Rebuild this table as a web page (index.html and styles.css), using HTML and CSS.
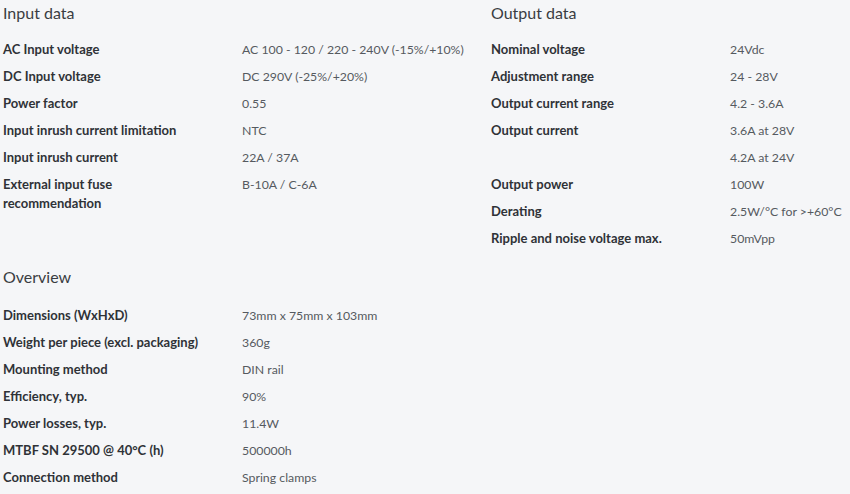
FILE: index.html
```html
<!DOCTYPE html>
<html>
<head>
<meta charset="utf-8">
<link rel="stylesheet" href="styles.css">
</head>
<body>
<div class="page">
  <div class="cols">
    <section class="block">
      <h3 class="title">Input data</h3>
      <div class="row"><div class="label">AC Input voltage</div><div class="value">AC 100 - 120 / 220 - 240V (-15%/+10%)</div></div>
      <div class="row"><div class="label">DC Input voltage</div><div class="value">DC 290V (-25%/+20%)</div></div>
      <div class="row"><div class="label">Power factor</div><div class="value">0.55</div></div>
      <div class="row"><div class="label">Input inrush current limitation</div><div class="value">NTC</div></div>
      <div class="row"><div class="label">Input inrush current</div><div class="value">22A / 37A</div></div>
      <div class="row"><div class="label">External input fuse<br>recommendation</div><div class="value">B-10A / C-6A</div></div>
    </section>
    <section class="block">
      <h3 class="title">Output data</h3>
      <div class="row"><div class="label">Nominal voltage</div><div class="value">24Vdc</div></div>
      <div class="row"><div class="label">Adjustment range</div><div class="value">24 - 28V</div></div>
      <div class="row"><div class="label">Output current range</div><div class="value">4.2 - 3.6A</div></div>
      <div class="row"><div class="label">Output current</div><div class="value">3.6A at 28V</div></div>
      <div class="row"><div class="label"></div><div class="value">4.2A at 24V</div></div>
      <div class="row"><div class="label">Output power</div><div class="value">100W</div></div>
      <div class="row"><div class="label">Derating</div><div class="value">2.5W/°C for &gt;+60°C</div></div>
      <div class="row"><div class="label">Ripple and noise voltage max.</div><div class="value">50mVpp</div></div>
    </section>
  </div>
  <section class="block overview">
    <h3 class="title">Overview</h3>
    <div class="row"><div class="label">Dimensions (WxHxD)</div><div class="value">73mm x 75mm x 103mm</div></div>
    <div class="row"><div class="label">Weight per piece (excl. packaging)</div><div class="value">360g</div></div>
    <div class="row"><div class="label">Mounting method</div><div class="value">DIN rail</div></div>
    <div class="row"><div class="label">Efficiency, typ.</div><div class="value">90%</div></div>
    <div class="row"><div class="label">Power losses, typ.</div><div class="value">11.4W</div></div>
    <div class="row"><div class="label">MTBF SN 29500 @ 40°C (h)</div><div class="value">500000h</div></div>
    <div class="row"><div class="label">Connection method</div><div class="value">Spring clamps</div></div>
  </section>
</div>
</body>
</html>
```
FILE: styles.css
```css
html, body {
  margin: 0;
  padding: 0;
  background: #f5f6f8;
}
body {
  font-family: Lato, "Open Sans", sans-serif;
  color: #333;
  overflow: hidden;
}
.page {
  padding: 0 0 0 3px;
}
.cols {
  display: grid;
  grid-template-columns: 488px minmax(0, 1fr);
}
.title {
  margin: 0;
  font-size: 16px;
  font-weight: 400;
  line-height: 26px;
  color: #3a3d42;
  padding-bottom: 10px;
}
.row {
  display: flex;
  padding: 4px 0;
  font-size: 12px;
  line-height: 19px;
}
.label {
  width: 239px;
  flex: none;
  font-size: 13px;
  font-weight: 700;
  color: #2f3237;
}
.value {
  font-size: 12.3px;
  color: #555a60;
  white-space: nowrap;
}
.overview {
  margin-top: 12px;
  width: 488px;
}
.overview .title {
  padding-bottom: 12px;
}
```
